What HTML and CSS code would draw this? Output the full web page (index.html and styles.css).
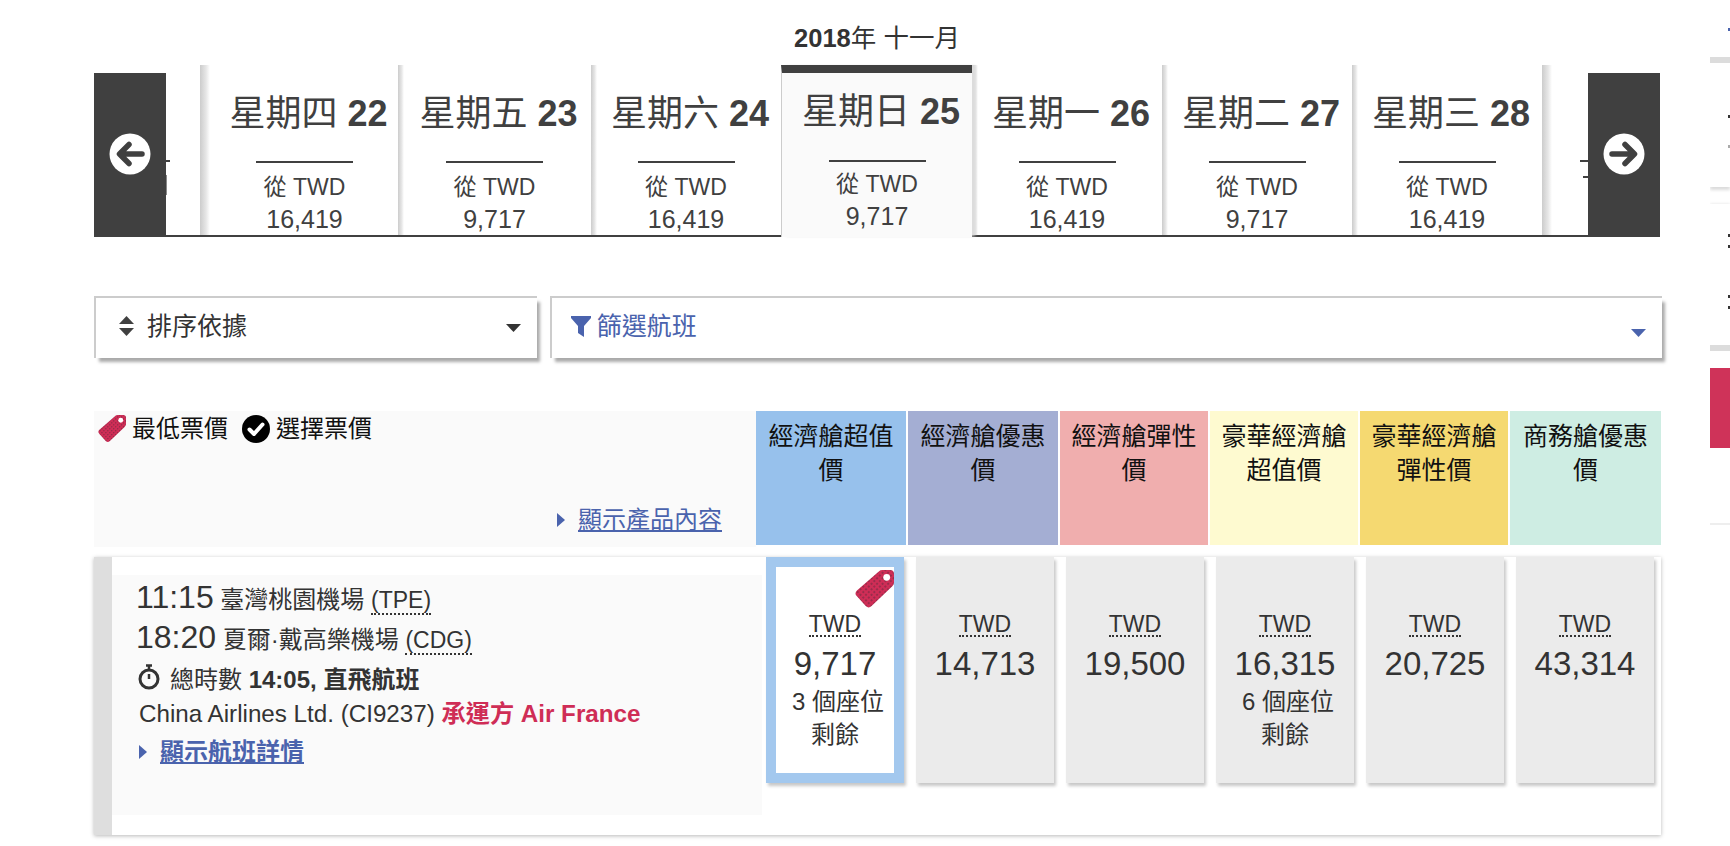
FILE: index.html
```html
<!DOCTYPE html>
<html lang="zh-Hant">
<head>
<meta charset="utf-8">
<title>航班選擇</title>
<link rel="stylesheet" href="styles.css">
</head>
<body>
<svg class="defs" width="0" height="0" aria-hidden="true">
  <defs>
    <pattern id="dots" width="4" height="4" patternUnits="userSpaceOnUse" patternTransform="rotate(45)">
      <rect width="4" height="4" fill="#cf2d56"/>
      <circle cx="2" cy="2" r=".75" fill="#4a2a3a"/>
    </pattern>
    <symbol id="tag" viewBox="0 0 40 40">
      <path d="M25 1Q26 0 28 0H36Q40 0 40 4V13Q40 15 38 17L17 37Q14 40 11 37L2 27Q-1 24 2 21Z" fill="url(#dots)"/>
      <circle cx="32.500" cy="7.500" r="3.500" fill="#fff"/>
    </symbol>
  </defs>
</svg>
<div class="page">
  <main class="main">
    <h1 class="month"><b>2018</b>年 十一月</h1>
    <section class="carousel">
      <div class="tabs">
        <div class="tab-stub tab-stub-left"><i class="stub-rule"></i><i class="stub-glyph"></i></div>
        <div class="tab tab-first"><div class="day">星期四 <b>22</b></div><div class="rule"></div><div class="from">從 TWD</div><div class="amount">16,419</div></div>
        <div class="tab tab-second"><div class="day">星期五 <b>23</b></div><div class="rule"></div><div class="from">從 TWD</div><div class="amount">9,717</div></div>
        <div class="tab"><div class="day">星期六 <b>24</b></div><div class="rule"></div><div class="from">從 TWD</div><div class="amount">16,419</div></div>
        <div class="tab tab-active"><div class="day">星期日 <b>25</b></div><div class="rule"></div><div class="from">從 TWD</div><div class="amount">9,717</div></div>
        <div class="tab"><div class="day">星期一 <b>26</b></div><div class="rule"></div><div class="from">從 TWD</div><div class="amount">16,419</div></div>
        <div class="tab"><div class="day">星期二 <b>27</b></div><div class="rule"></div><div class="from">從 TWD</div><div class="amount">9,717</div></div>
        <div class="tab"><div class="day">星期三 <b>28</b></div><div class="rule"></div><div class="from">從 TWD</div><div class="amount">16,419</div></div>
        <div class="tab-stub tab-stub-right"><i class="stub-rule"></i><i class="stub-glyph"></i></div>
      </div>
      <button class="arrow arrow-prev" aria-label="上一週">
        <svg width="42" height="42" viewBox="0 0 42 42"><circle cx="21" cy="21" r="20.500" fill="#fff"/><path d="M33 21H12M20 11.500L10.500 21L20 30.500" fill="none" stroke="#404040" stroke-width="5.500" stroke-linecap="round" stroke-linejoin="round"/></svg>
      </button>
      <button class="arrow arrow-next" aria-label="下一週">
        <svg width="42" height="42" viewBox="0 0 42 42"><circle cx="21" cy="21" r="20.500" fill="#fff"/><path d="M9 21H30M22 11.500L31.500 21L22 30.500" fill="none" stroke="#404040" stroke-width="5.500" stroke-linecap="round" stroke-linejoin="round"/></svg>
      </button>
    </section>

    <section class="controls">
      <div class="control control-sort">
        <svg class="icon-sort" width="15" height="20" viewBox="0 0 15 20"><path d="M7.500 0L15 8H0ZM7.500 20L0 12H15Z" fill="#404040"/></svg>
        <span class="control-label">排序依據</span>
        <svg class="caret" width="15" height="8" viewBox="0 0 15 8"><path d="M0 0H15L7.500 8Z" fill="#333"/></svg>
      </div>
      <div class="control control-filter">
        <svg class="icon-filter" width="20" height="21" viewBox="0 0 20 21"><path d="M0 0H20V2L13 10V21L7 17V10L0 2Z" fill="#4a63ad"/></svg>
        <span class="control-label">篩選航班</span>
        <svg class="caret caret-low" width="15" height="8" viewBox="0 0 15 8"><path d="M0 0H15L7.500 8Z" fill="#4a63ad"/></svg>
      </div>
    </section>

    <section class="fare-head">
      <div class="legend">
        <div class="legend-keys">
          <svg class="legend-icon" width="28" height="28"><use href="#tag"/></svg>
          <span class="legend-text">最低票價</span>
          <svg class="legend-icon legend-check" width="28" height="28" viewBox="0 0 28 28"><circle cx="14" cy="14" r="14" fill="#000"/><path d="M7.500 14.500L12 19L20.500 9.500" fill="none" stroke="#fff" stroke-width="4" stroke-linecap="round" stroke-linejoin="round"/></svg>
          <span class="legend-text">選擇票價</span>
        </div>
        <div class="legend-link">
          <svg width="8" height="14" viewBox="0 0 8 14"><path d="M0 0L8 7L0 14Z" fill="#4a63ad"/></svg>
          <a class="link" href="#">顯示產品內容</a>
        </div>
      </div>
      <div class="col col-1">經濟艙超值價</div>
      <div class="col col-2">經濟艙優惠價</div>
      <div class="col col-3">經濟艙彈性價</div>
      <div class="col col-4">豪華經濟艙超值價</div>
      <div class="col col-5">豪華經濟艙彈性價</div>
      <div class="col col-6">商務艙優惠價</div>
    </section>

    <section class="flight">
      <div class="flight-bar"></div>
      <div class="info">
        <div class="leg"><span class="time">11:15</span> 臺灣桃園機場 <abbr>(TPE)</abbr></div>
        <div class="leg"><span class="time">18:20</span> 夏爾·戴高樂機場 <abbr>(CDG)</abbr></div>
        <div class="duration">
          <svg width="22" height="26" viewBox="0 0 22 26"><path d="M8 1.500H14M11 1.500V5" fill="none" stroke="#333" stroke-width="2.500"/><circle cx="11" cy="15" r="9" fill="none" stroke="#333" stroke-width="3"/><path d="M11 10V15" fill="none" stroke="#333" stroke-width="2.500"/></svg>
          <span>總時數 <b>14:05, 直飛航班</b></span>
        </div>
        <div class="carrier">China Airlines Ltd. (CI9237) <b class="operated">承運方 Air France</b></div>
        <div class="details">
          <svg width="8" height="14" viewBox="0 0 8 14"><path d="M0 0L8 7L0 14Z" fill="#4a63ad"/></svg>
          <a class="link link-bold" href="#">顯示航班詳情</a>
        </div>
      </div>
      <div class="fares">
        <div class="fare fare-selected">
          <svg class="fare-tag" width="39" height="39"><use href="#tag"/></svg>
          <abbr class="cur">TWD</abbr><div class="price">9,717</div><div class="seats seats-count">3 個座位</div><div class="seats">剩餘</div>
        </div>
        <div class="fare"><abbr class="cur">TWD</abbr><div class="price">14,713</div></div>
        <div class="fare"><abbr class="cur">TWD</abbr><div class="price">19,500</div></div>
        <div class="fare"><abbr class="cur">TWD</abbr><div class="price">16,315</div><div class="seats seats-count">6 個座位</div><div class="seats">剩餘</div></div>
        <div class="fare"><abbr class="cur">TWD</abbr><div class="price">20,725</div></div>
        <div class="fare"><abbr class="cur">TWD</abbr><div class="price">43,314</div></div>
      </div>
    </section>
  </main>

  <aside class="side">
    <i class="side-mark side-mark-blue"></i>
    <div class="side-bar side-bar-top"></div>
    <div class="side-card side-card-a"><i class="side-mark side-mark-a1"></i><i class="side-mark side-mark-a2"></i></div>
    <div class="side-card side-card-b"><i class="side-mark side-mark-b1"></i><i class="side-mark side-mark-b2"></i><i class="side-mark side-mark-b3"></i><i class="side-mark side-mark-b2"></i></div>
    <div class="side-bar"></div>
    <div class="side-red"></div>
    <div class="side-line"></div>
  </aside>
</div>
</body>
</html>
```

FILE: styles.css
```css
* { box-sizing: border-box; }
html, body { margin: 0; height: 846px; overflow: hidden; background: #fff; }
body { font-family: "Liberation Sans", "Noto Sans CJK TC", sans-serif; color: #333; }
.defs { position: absolute; }
.page { display: flex; width: 1730px; height: 846px; }
.main { width: 1568px; margin-left: 94px; flex: none; }

/* month + carousel */
.month { height: 65px; margin: 0; padding-top: 21px; text-align: center; font-size: 25.500px; line-height: 34px; font-weight: 400; color: #333; transform: translateX(-1px); }
.carousel { position: relative; width: 1566px; height: 172px; }
.tabs { display: flex; height: 172px; border-bottom: 2px solid #404040; }
.tab { position: relative; width: 190px; flex: none; text-align: center; padding-top: 28px; background: linear-gradient(90deg, #ccc, #e6e6e6 60%, #fff) left top / 6px 100% no-repeat; }
.tab-first { width: 198px; padding-left: 11px; background-size: 10px 100%; }
.tab-second { width: 193px; }
.tab-active { width: 191px; height: 172px; border-top: 8px solid #404040; padding-top: 18px; background: #fafafa; border-left: 1px solid #ccc; box-shadow: 4px 0 3px -1px #ddd; z-index: 1; }
.tab-active .rule { margin-top: 27px; }
.tab-active .from { margin-top: 7px; }
.day { font-size: 36px; line-height: 42px; white-space: nowrap; color: #404040; margin: 0 -6px 0 2px; }
.day b { color: #404040; }
.rule { width: 97px; height: 2px; background: #404040; margin: 26px auto 0; }
.from { font-size: 23px; line-height: 30px; margin-top: 9px; color: #404040; }
.amount { font-size: 25px; line-height: 30px; margin-top: 2px; color: #404040; }
.tab-stub { position: relative; flex: none; }
.tab-stub-left { width: 106px; padding-top: 95px; padding-left: 72px; }
.tab-stub-right { width: 118px; padding-top: 95px; padding-left: 38px; background: linear-gradient(90deg, #ccc, #e6e6e6 60%, #fff) left top / 10px 100% no-repeat; }
.stub-rule { display: block; width: 10px; height: 2px; background: #404040; }
.tab-stub-left .stub-rule { width: 4px; }
.stub-glyph { display: block; width: 1px; height: 20px; margin-top: 13px; background: #888; }
.tab-stub-right .stub-glyph { width: 8px; height: 2px; margin: 14px 0 0 3px; background: #404040; }
.arrow { position: absolute; top: 8px; width: 72px; height: 163px; margin: 0; padding: 0; border: 0; background: #404040; display: flex; align-items: center; justify-content: center; z-index: 2; }
.arrow-prev { left: 0; }
.arrow-next { right: 0; }
.arrow svg { margin-top: -1px; }

/* sort + filter */
.controls { display: flex; gap: 13px; margin-top: 59px; }
.control { display: flex; align-items: center; height: 62px; padding-bottom: 4px; background: #fff; border-top: 2px solid #ccc; border-left: 2px solid #ccc; box-shadow: 4px 5px 3px -1px #aaa; font-size: 25px; }
.control-sort { width: 443px; padding-right: 16px; padding-left: 23px; color: #333; }
.control-filter { width: 1113px; padding-right: 16px; padding-left: 19px; color: #4a63ad; }
.control-label { margin-left: 6px; flex: 1; line-height: 30px; }
.control-sort .control-label { margin-left: 13px; }
.caret { margin-top: 3px; }
.caret-low { margin-top: 14px; }

/* header row */
.fare-head { display: grid; grid-template-columns: 662px 152px 152px 150px 150px 150px 151px; height: 136px; margin-top: 53px; }
.legend { background: #fafafa; padding: 4px 34px 0 4px; display: flex; flex-direction: column; justify-content: space-between; }
.legend-keys { display: flex; align-items: center; height: 28px; }
.legend-text { font-size: 24px; color: #111; margin-left: 6px; line-height: 28px; }
.legend-check { margin-left: 14px; }
.legend-link { display: flex; align-items: center; justify-content: flex-end; gap: 13px; font-size: 24px; margin-bottom: 10px; }
.link { color: #4a63ad; text-decoration: underline; line-height: 34px; }
.link-bold { font-weight: 700; }
.col { height: 134px; border-right: 2px solid #fff; padding: 8px 10px 0; text-align: center; font-size: 25px; line-height: 34px; color: #111; }
.col-1 { background: #97c1ec; }
.col-2 { background: #a4aed3; }
.col-3 { background: #f0aeae; }
.col-4 { background: #fefad0; }
.col-5 { background: #f5d971; }
.col-6 { background: #ceede3; border-right: 0; }

/* flight row */
.flight { display: flex; width: 1567px; height: 278px; margin-top: 10px; background: #fff; box-shadow: 0 1px 4px rgba(0, 0, 0, .28); }
.flight-bar { width: 18px; flex: none; background: #dedede; }
.info { width: 650px; height: 240px; margin-top: 18px; flex: none; background: #fafafa; padding: 0 0 0 24px; font-size: 24px; color: #333; }
.leg { height: 40px; line-height: 44px; white-space: nowrap; }
.leg abbr { font-size: 23px; line-height: 26px; display: inline-block; }
.time { font-size: 32px; }
abbr { text-decoration: none; border-bottom: 2px dotted #333; }
.duration { display: flex; align-items: center; gap: 10px; height: 42px; margin-top: 1px; padding-left: 2px; white-space: nowrap; }
.carrier { height: 34px; line-height: 34px; margin-top: -1px; padding-left: 3px; font-size: 24.200px; white-space: nowrap; }
.operated { color: #cf2d56; }
.details { display: flex; align-items: center; gap: 13px; height: 40px; margin-top: 1px; padding-left: 3px; }
.fares { display: flex; gap: 12px; margin-left: 4px; height: 226px; }
.fare { position: relative; width: 138px; height: 226px; flex: none; border: 10px solid #ebebeb; background: #ebebeb; padding-top: 43px; text-align: center; font-size: 24px; box-shadow: 2px 3px 3px rgba(0, 0, 0, .22); }
.fare-selected { border-color: #a3c8ee; background: #fff; }
.fare-tag { position: absolute; top: 3px; right: 0; }
.cur { display: inline-block; font-size: 23px; line-height: 28px; height: 27px; margin-bottom: 5px; color: #333; }
.price { font-size: 33px; line-height: 40px; margin-top: 2px; color: #333; }
.seats { line-height: 33px; white-space: nowrap; color: #333; }
.seats-count { margin-top: 1px; padding-left: 6px; }

/* right column */
.side { width: 20px; margin-left: 48px; flex: none; overflow: hidden; position: relative; }
.side-mark { display: block; width: 2px; height: 3px; margin-left: 18px; background: #333; }
.side-mark-blue { position: absolute; top: 28px; left: 0; background: #4a63ad; }
.side-bar { height: 6px; background: #dcdcdc; }
.side-bar-top { margin-top: 57px; }
.side-card { background: #fff; box-shadow: 0 0 3px rgba(0, 0, 0, .12); }
.side-card-a { height: 107px; margin-top: 17px; padding-top: 35px; box-shadow: 0 3px 3px rgba(0, 0, 0, .14); }
.side-mark-a2 { margin-top: 27px; background: #aaa; }
.side-card-b { height: 141px; margin-top: 17px; padding-top: 30px; }
.side-mark-b1 { margin-bottom: 8px; }
.side-mark-b2 { margin-bottom: 8px; }
.side-mark-b3 { margin-top: 47px; margin-bottom: 8px; }
.side-red { height: 80px; margin-top: 17px; background: #cf3359; }
.side-line { height: 2px; margin-top: 75px; background: #eee; }
```
